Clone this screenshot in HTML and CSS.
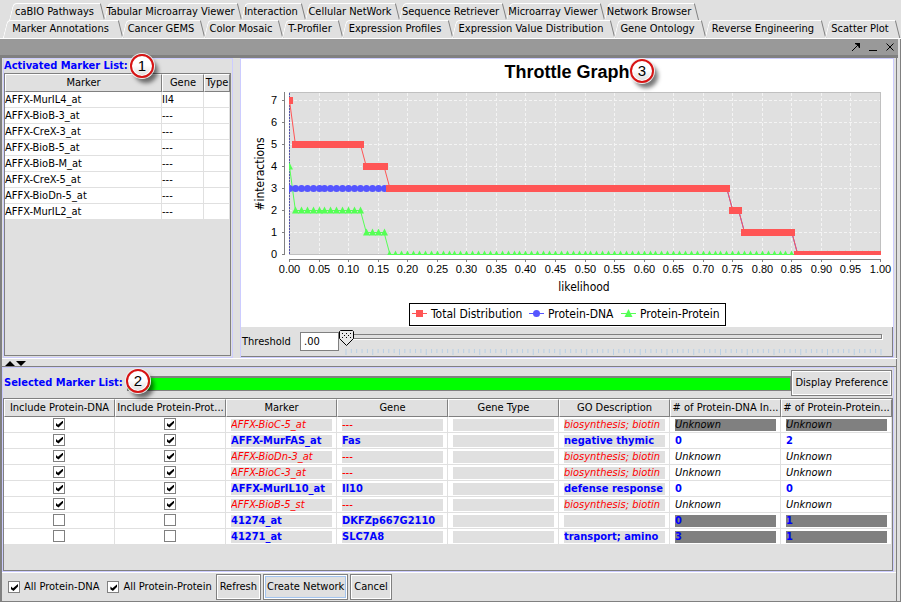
FILE: index.html
```
<!DOCTYPE html>
<html lang="en">
<head>
<meta charset="utf-8">
<title>Cellular NetWork</title>
<link rel="stylesheet" href="styles.css">
</head>
<body>
<div class="app">
  <nav class="tabs" aria-label="Visual components">
    <div class="tab-row tab-row-back">
      <button class="tab">caBIO Pathways</button>
      <button class="tab">Tabular Microarray Viewer</button>
      <button class="tab">Interaction</button>
      <button class="tab tab-active">Cellular NetWork</button>
      <button class="tab">Sequence Retriever</button>
      <button class="tab">Microarray Viewer</button>
      <button class="tab">Network Browser</button>
    </div>
    <div class="tab-row tab-row-front">
      <button class="tab">Marker Annotations</button>
      <button class="tab">Cancer GEMS</button>
      <button class="tab">Color Mosaic</button>
      <button class="tab">T-Profiler</button>
      <button class="tab">Expression Profiles</button>
      <button class="tab">Expression Value Distribution</button>
      <button class="tab">Gene Ontology</button>
      <button class="tab">Reverse Engineering</button>
      <button class="tab">Scatter Plot</button>
    </div>
  </nav>
  <div class="window">
    <header class="titlebar">
      <button class="win-btn" aria-label="Undock"><svg width="10" height="10" viewBox="0 0 10 10"><path d="M1 9L8 2" stroke="#000" fill="none"/><path d="M4 1H9V6H8L7 4L6 3L4 2Z"/></svg></button>
      <button class="win-btn" aria-label="Minimize"><svg width="10" height="10" viewBox="0 0 10 10"><path d="M1 8H9V9H1Z"/></svg></button>
      <button class="win-btn" aria-label="Close"><svg width="10" height="10" viewBox="0 0 10 10"><path d="M1.500 1.500L8.500 8.500M8.500 1.500L1.500 8.500" stroke="#000" fill="none"/></svg></button>
    </header>
    <main class="content">
      <div class="upper">
        <section class="activated">
          <h2 class="list-title">Activated Marker List:</h2>
          <span class="badge badge-one">1</span>
          <div class="activated-scroll">
            <table class="grid activated-table">
              <colgroup><col class="c-marker"><col class="c-gene"><col></colgroup>
              <thead><tr><th>Marker</th><th>Gene</th><th>Type</th></tr></thead>
              <tbody>
                <tr><td>AFFX-MurIL4_at</td><td>Il4</td><td></td></tr>
                <tr><td>AFFX-BioB-3_at</td><td>---</td><td></td></tr>
                <tr><td>AFFX-CreX-3_at</td><td>---</td><td></td></tr>
                <tr><td>AFFX-BioB-5_at</td><td>---</td><td></td></tr>
                <tr><td>AFFX-BioB-M_at</td><td>---</td><td></td></tr>
                <tr><td>AFFX-CreX-5_at</td><td>---</td><td></td></tr>
                <tr><td>AFFX-BioDn-5_at</td><td>---</td><td></td></tr>
                <tr><td>AFFX-MurIL2_at</td><td>---</td><td></td></tr>
              </tbody>
            </table>
          </div>
        </section>
        <section class="graph">
          <svg class="chart" id="chart" viewBox="241 59 652 268" role="img" aria-label="Throttle Graph">
            <text class="chart-title" x="567" y="78">Throttle Graph</text>
            <text class="axis-title" x="584" y="291">likelihood</text>
            <text class="axis-title" transform="translate(264 174) rotate(-90)">#interactions</text>
            <rect class="plot" x="289.500" y="92.500" width="591" height="162"/>
            <g id="axes"></g>
            <clipPath id="plot-clip"><rect x="289" y="92" width="592" height="163"/></clipPath>
            <g id="series" clip-path="url(#plot-clip)"></g>
            <rect x="409" y="303" width="316" height="22" fill="#fff" stroke="#000" stroke-width="1" shape-rendering="crispEdges"/>
            <path d="M412 313.500H427" stroke="#f55"/><rect x="416" y="310" width="7" height="7" fill="#f55"/>
            <text class="legend" x="431" y="318">Total Distribution</text>
            <path d="M529 313.500H544" stroke="#55f"/><circle cx="536.500" cy="313.500" r="3.500" fill="#55f"/>
            <text class="legend" x="548" y="318">Protein-DNA</text>
            <path d="M621 313.500H636" stroke="#5f5"/><path d="M628.500 309L632.500 317H624.500Z" fill="#5f5"/>
            <text class="legend" x="640" y="318">Protein-Protein</text>
          </svg>
          <span class="badge badge-three">3</span>
          <div class="threshold">
            <label for="threshold">Threshold</label>
            <input class="threshold-value" id="threshold" type="text" value=".00">
            <div class="slider">
              <input class="slider-input" type="range" min="0" max="100" value="0" aria-label="Threshold">
              <svg class="ticks" id="ticks" aria-hidden="true"></svg>
            </div>
          </div>
        </section>
      </div>
      <div class="divider"><svg width="22" height="6" viewBox="0 0 22 6"><path d="M0 5L5 0L10 5ZM11 0H21L16 5Z"/></svg></div>
      <section class="selected">
        <div class="selected-head">
          <h2 class="list-title">Selected Marker List:</h2>
          <div class="progress" role="progressbar" aria-label="Progress" aria-valuenow="100"></div>
          <span class="badge badge-two">2</span>
          <button class="btn">Display Preference</button>
        </div>
        <div class="selected-scroll">
          <table class="grid selected-table">
            <thead><tr><th>Include Protein-DNA</th><th>Include Protein-Prot...</th><th>Marker</th><th>Gene</th><th>Gene Type</th><th>GO Description</th><th># of Protein-DNA In...</th><th># of Protein-Protein...</th></tr></thead>
            <tbody>
              <tr class="missing"><td><input type="checkbox" aria-label="Protein-DNA" checked></td><td><input type="checkbox" aria-label="Protein-Protein" checked></td><td><span>AFFX-BioC-5_at</span></td><td><span>---</span></td><td><span></span></td><td><span>biosynthesis; biotin</span></td><td class="count dim"><span>Unknown</span></td><td class="count dim"><span>Unknown</span></td></tr>
              <tr class="found"><td><input type="checkbox" aria-label="Protein-DNA" checked></td><td><input type="checkbox" aria-label="Protein-Protein" checked></td><td><span>AFFX-MurFAS_at</span></td><td><span>Fas</span></td><td><span></span></td><td><span>negative thymic</span></td><td class="count"><span>0</span></td><td class="count"><span>2</span></td></tr>
              <tr class="missing"><td><input type="checkbox" aria-label="Protein-DNA" checked></td><td><input type="checkbox" aria-label="Protein-Protein" checked></td><td><span>AFFX-BioDn-3_at</span></td><td><span>---</span></td><td><span></span></td><td><span>biosynthesis; biotin</span></td><td class="count"><span>Unknown</span></td><td class="count"><span>Unknown</span></td></tr>
              <tr class="missing"><td><input type="checkbox" aria-label="Protein-DNA" checked></td><td><input type="checkbox" aria-label="Protein-Protein" checked></td><td><span>AFFX-BioC-3_at</span></td><td><span>---</span></td><td><span></span></td><td><span>biosynthesis; biotin</span></td><td class="count"><span>Unknown</span></td><td class="count"><span>Unknown</span></td></tr>
              <tr class="found"><td><input type="checkbox" aria-label="Protein-DNA" checked></td><td><input type="checkbox" aria-label="Protein-Protein" checked></td><td><span>AFFX-MurIL10_at</span></td><td><span>Il10</span></td><td><span></span></td><td><span>defense response</span></td><td class="count"><span>0</span></td><td class="count"><span>0</span></td></tr>
              <tr class="missing"><td><input type="checkbox" aria-label="Protein-DNA" checked></td><td><input type="checkbox" aria-label="Protein-Protein" checked></td><td><span>AFFX-BioB-5_st</span></td><td><span>---</span></td><td><span></span></td><td><span>biosynthesis; biotin</span></td><td class="count"><span>Unknown</span></td><td class="count"><span>Unknown</span></td></tr>
              <tr class="found"><td><input type="checkbox" aria-label="Protein-DNA"></td><td><input type="checkbox" aria-label="Protein-Protein"></td><td><span>41274_at</span></td><td><span>DKFZp667G2110</span></td><td><span></span></td><td><span></span></td><td class="count dim"><span>0</span></td><td class="count dim"><span>1</span></td></tr>
              <tr class="found"><td><input type="checkbox" aria-label="Protein-DNA"></td><td><input type="checkbox" aria-label="Protein-Protein"></td><td><span>41271_at</span></td><td><span>SLC7A8</span></td><td><span></span></td><td><span>transport; amino</span></td><td class="count dim"><span>3</span></td><td class="count dim"><span>1</span></td></tr>
            </tbody>
          </table>
        </div>
      </section>
      <footer class="actions">
        <label class="check"><input type="checkbox" checked>All Protein-DNA</label>
        <label class="check"><input type="checkbox" checked>All Protein-Protein</label>
        <div class="action-buttons">
          <button class="btn">Refresh</button>
          <button class="btn btn-focus">Create Network</button>
          <button class="btn">Cancel</button>
        </div>
      </footer>
    </main>
  </div>
</div>
<script src="chart.js"></script>
</body>
</html>
```
FILE: styles.css
```
* { box-sizing: border-box; }
body {
  margin: 0;
  background: #e0e0e0;
  color: #000;
  font: 11px/14px "DejaVu Sans Condensed", Tahoma, sans-serif;
}
button, input { font: inherit; color: inherit; margin: 0; padding: 0; }
h2 { margin: 0; font-size: 11px; line-height: 14px; }
.app { display: flex; flex-direction: column; min-height: 100vh; }

/* Tabs */
.tabs { padding: 3px 3px 0 2px; border-bottom: 1px solid #fff; }
.tab-row { display: grid; }
.tab-row-back {
  padding-left: 6px;
  grid-template-columns: 95fr 137fr 64fr 94fr 107fr 98fr 94fr 201fr;
}
.tab-row-front { grid-template-columns: 119fr 82fr 78fr 60fr 110fr 162fr 91fr 120fr 74fr; }
.tab {
  position: relative;
  min-width: 0;
  height: 17px;
  padding-right: 2px;
  border: 0;
  background: none;
  text-align: center;
  white-space: nowrap;
  line-height: 16px;
}
.tab::before, .tab::after {
  content: "";
  position: absolute;
  z-index: -1;
  top: 0;
  height: 17px;
}
.tab::before {
  left: 3px;
  right: 4px;
  border: solid #fff;
  border-width: 1px 0 0 1px;
  border-top-left-radius: 4px;
  transform: skewX(-14deg);
}
.tab::after {
  right: 0;
  width: 3px;
  border-right: 1px solid #808080;
  border-top: 1px solid #fff;
  transform: skewX(14deg);
}
.tab-row-front .tab { height: 18px; }
.tab-active { line-height: 14px; }

/* Window */
.window {
  flex: 1;
  display: flex;
  flex-direction: column;
  border-right: 1px solid #808080;
  border-bottom: 1px solid #808080;
}
.titlebar {
  display: flex;
  justify-content: flex-end;
  gap: 7px;
  height: 19px;
  padding: 3px 3px 0 0;
  margin-right: 2px;
  background: #999;
  border-bottom: 3px solid #808080;
}
.win-btn { width: 10px; height: 10px; border: 0; background: none; }
.win-btn svg { display: block; }
.content {
  flex: 1;
  display: flex;
  flex-direction: column;
  margin-right: 3px;
  border-left: 2px solid #808080;
  border-right: 1px solid #808080;
}

.upper {
  display: grid;
  grid-template-columns: 230px minmax(0, 1fr);
  gap: 7px;
  padding: 0 2px 0 1px;
}
.activated, .graph { position: relative; border: 1px solid #ccf; }
.activated { display: flex; flex-direction: column; }
.list-title { color: #00f; font-weight: bold; white-space: nowrap; }
.activated-scroll { flex: 1; margin: 0 1px 1px 0; border: 1px solid #808080; }

.grid { width: 100%; border-collapse: separate; border-spacing: 0; table-layout: fixed; }
.grid th, .grid td { overflow: hidden; white-space: nowrap; padding: 0; }
.grid th {
  height: 18px;
  font-weight: normal;
  border-top: 1px solid #fff;
  border-left: 1px solid #fff;
  border-right: 1px solid #808080;
  border-bottom: 1px solid #808080;
}
.grid td { height: 16px; line-height: 14px; background: #fff; border: solid #e0e0e0; border-width: 0 1px 1px 0; }
.c-marker { width: 157px; }
.c-gene { width: 42px; }

/* Graph */
.graph { background: #fff; }
.chart { display: block; width: 100%; height: auto; }
.chart-title { font: bold 18px "Liberation Sans", Arial, sans-serif; text-anchor: middle; }
.axis-title { font-size: 12px; text-anchor: middle; }
.legend { font-size: 12px; }
.tick-x, .tick-y { font: 11px "Liberation Sans", Arial, sans-serif; }
.tick-x { text-anchor: middle; }
.tick-y { text-anchor: end; }
.plot { fill: #e0e0e0; stroke: #c0c0c0; }
.threshold {
  display: flex;
  align-items: center;
  height: 30px;
  padding: 0 4px 0 1px;
  background: #e0e0e0;
  border: solid #808080;
  border-width: 0 1px 1px 0;
}
.threshold label { width: 58px; }
.threshold-value { width: 39px; height: 19px; padding: 0 3px; border: 1px solid #808080; background: #fff; }
.slider { flex: 1; padding-top: 1px; }
.slider-input {
  display: block;
  width: 100%;
  height: 18px;
  appearance: none;
  background:
    linear-gradient(#e0e0e0, #e0e0e0) 9px 6px / calc(100% - 16px) 3px no-repeat,
    linear-gradient(#808080, #808080) 8px 5px / calc(100% - 14px) 5px no-repeat,
    linear-gradient(#fff, #fff) 9px 6px / calc(100% - 14px) 5px no-repeat;
}
.slider-input::-webkit-slider-thumb {
  appearance: none;
  width: 15px;
  height: 16px;
  background: url("data:image/svg+xml,%3Csvg xmlns='http://www.w3.org/2000/svg' width='15' height='16'%3E%3Cpath d='M1.5.5H13.500L14.500 1.500V8.500L7.500 15.500L.5 8.500V1.500Z' fill='%23e8e8e8' stroke='%23000'/%3E%3Cpath d='M3 3h1v1H3zM7 3h1v1H7zM11 3h1v1h-1zM5 5h1v1H5zM9 5h1v1H9zM3 7h1v1H3zM7 7h1v1H7zM11 7h1v1h-1z'/%3E%3C/svg%3E");
}
.ticks { display: block; width: calc(100% - 14px); height: 6px; margin: 2px 0 0 7px; overflow: visible; }

.badge {
  position: absolute;
  z-index: 2;
  width: 24px;
  height: 24px;
  border: 2px solid #d81414;
  border-radius: 50%;
  background: linear-gradient(#fff 45%, #ddd);
  box-shadow: inset 0 0 0 1px #fff, 0 0 0 1px #eee, 4px 5px 4px #0008;
  font: 15px/20px "Liberation Sans", Arial, sans-serif;
  text-align: center;
}
.badge-one { left: 126px; top: -5px; }
.badge-two { left: 123px; top: 1px; }
.badge-three { left: 389px; top: 0; }

.divider { height: 9px; padding: 2px 0 0 3px; margin-right: -1px; border-top: 1px solid #fff; border-bottom: 1px solid #808080; }
.divider svg { display: block; }

/* Selected list */
.selected {
  flex: 1;
  display: flex;
  flex-direction: column;
  margin-right: 2px;
  border: 1px solid #ccf;
}
.selected-head { position: relative; display: flex; align-items: center; height: 30px; padding: 0 1px; }
.selected-head .list-title { width: 123px; }
.progress { flex: 1; height: 15px; background: #0f0; border: 1px solid #808080; border-top-width: 2px; }
.btn {
  height: 26px;
  padding: 0 3px;
  background: #e0e0e0;
  border: 1px solid #808080;
  box-shadow: inset 1px 1px #fff, inset -1px -1px #fff;
  white-space: nowrap;
}
.selected-scroll { flex: 1; border: 1px solid #808080; }
.selected-table td { padding: 0 4px 0 5px; }
.selected-table td:nth-child(-n+2) { padding: 0; text-align: center; }
.selected-table span { display: block; height: 12px; line-height: 12px; background: #e0e0e0; overflow: hidden; }
.selected-table .count span { background: #fff; color: #000; }
.selected-table .dim span { background: #808080; }
.missing { color: #f00; font-style: italic; }
.found, .selected-table .found .count span { color: #00f; font-weight: bold; }

input[type="checkbox"] {
  appearance: none;
  display: inline-block;
  width: 12px;
  height: 12px;
  vertical-align: top;
  border: 1px solid #808080;
  background: #fff;
  position: relative;
}
input[type="checkbox"]:checked::after {
  content: "";
  position: absolute;
  left: 2px;
  top: 2px;
  width: 7px;
  height: 7px;
  background: #000;
  clip-path: polygon(0 35%, 28% 60%, 100% 0, 100% 36%, 36% 100%, 0 75%);
}

.actions {
  display: flex;
  align-items: center;
  gap: 8px;
  height: 29px;
  padding: 0 6px;
  border-top: 1px solid #fff;
}
.check { display: flex; align-items: center; gap: 4px; white-space: nowrap; }
.action-buttons { display: flex; gap: 2px; margin-left: -4px; }
.btn-focus { box-shadow: inset 0 0 0 1px #fff, inset 0 0 0 2px #a3c4ee; }
```
FILE: chart.js
```
// Draws the throttle graph: interaction counts against likelihood in steps of 0.01.
const NS = "http://www.w3.org/2000/svg";
const STEP = 5.91;
const X = i => 289 + i * STEP;
const Y = v => 254 - v * 22;

function add(parent, name, attrs, text) {
  const el = document.createElementNS(NS, name);
  for (const key in attrs) el.setAttribute(key, attrs[key]);
  if (text !== undefined) el.textContent = text;
  parent.appendChild(el);
}

// Each run is [last index, value].
function expand(runs) {
  const out = [];
  for (const [last, value] of runs) while (out.length <= last) out.push(value);
  return out;
}

const axes = document.getElementById("axes");
const gray = { stroke: "#808080", "shape-rendering": "crispEdges" };
for (let v = 0; v <= 7; v++) {
  if (v) add(axes, "path", { d: `M289 ${Y(v) + 0.5}H880`, stroke: "#f4f4f4", "stroke-dasharray": "3 2" });
  add(axes, "path", { d: `M282 ${Y(v) + 0.5}H285`, ...gray });
  add(axes, "text", { x: 277, y: Y(v) + 4, class: "tick-y" }, v);
}
for (let i = 0; i <= 100; i += 5) {
  const x = Math.round(X(i)) + 0.5;
  if (i && i < 100) add(axes, "path", { d: `M${x} 93V254`, stroke: "#f4f4f4", "stroke-dasharray": "3 2" });
  add(axes, "path", { d: `M${x} 259V262`, ...gray });
  add(axes, "text", { x, y: 273, class: "tick-x" }, (i / 100).toFixed(2));
}
add(axes, "path", { d: "M284.500 92V254M289 259.500H881", ...gray });
add(axes, "path", { d: "M289.500 93V254", stroke: "#55a", "stroke-dasharray": "2 1" });

const series = document.getElementById("series");
function draw(runs, color, mark) {
  const values = expand(runs);
  const points = values.map((v, i) => `${X(i) + 0.5},${Y(v) + 0.5}`).join(" ");
  add(series, "polyline", { points, fill: "none", stroke: color });
  values.forEach((v, i) => mark(Math.round(X(i)) + 0.5, Y(v) + 0.5, color));
}
draw([[0, 4], [12, 2], [16, 1], [100, 0]], "#5f5", (x, y, fill) =>
  add(series, "path", { d: `M${x} ${y - 4}L${x + 3.5} ${y + 3}H${x - 3.5}Z`, fill }));
draw([[74, 3], [76, 2], [85, 1], [100, 0]], "#55f", (x, y, fill) =>
  add(series, "circle", { cx: x, cy: y, r: 3.5, fill }));
draw([[0, 7], [12, 5], [16, 4], [74, 3], [76, 2], [85, 1], [100, 0]], "#f55", (x, y, fill) =>
  add(series, "rect", { x: x - 3.5, y: y - 3.5, width: 7, height: 7, fill }));

const ticks = document.getElementById("ticks");
for (let i = 0; i <= 100; i++) {
  add(ticks, "line", { x1: `${i}%`, x2: `${i}%`, y1: 0, y2: i % 5 ? 4 : 6, stroke: "#b8cfe5" });
}
```
